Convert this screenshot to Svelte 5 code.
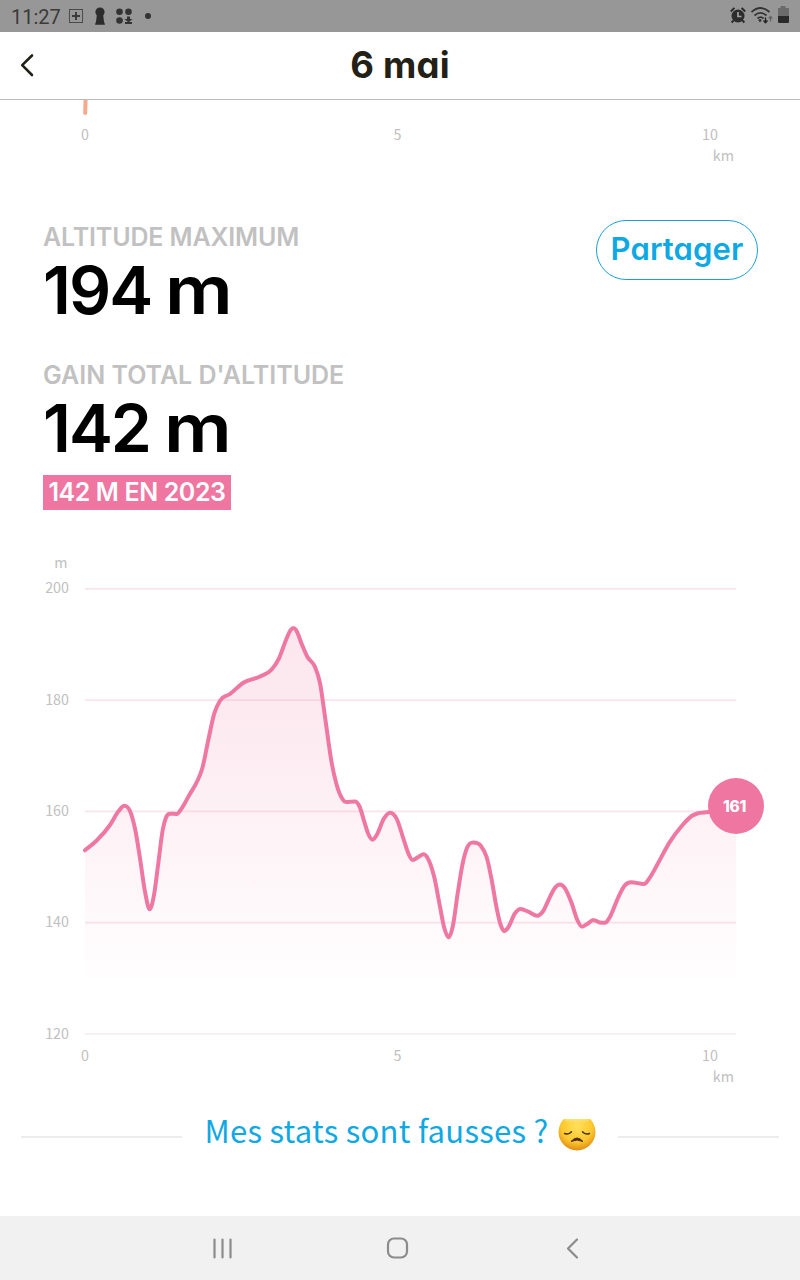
<script lang="ts">
  const left = 85;
  const right = 736;
  const ticks = [200, 180, 160, 140, 120];
  const kms = [0, 5, 10];

  const points = [
    [85, 310.3], [96.7, 300.5], [110, 285], [118.3, 271.5], [124.3, 265.7], [130, 271], [135.3, 290],
    [140, 318.3], [145, 351.7], [149.7, 369.3], [154, 355], [158.3, 323.3], [162.7, 290], [166, 277.5],
    [170, 273.7], [176.7, 274], [181.7, 268.3], [189.3, 255], [197.3, 241], [202.3, 228.3], [208.3, 200],
    [214.3, 173.3], [220, 160.7], [230, 154], [243.3, 142.7], [260, 136.5], [271.7, 129.5], [279, 118.3],
    [286, 100], [290.7, 90], [293.3, 88], [296, 90], [301.7, 104], [307.3, 116.7], [315, 127],
    [320, 143], [325, 176.7], [331.7, 223], [336.7, 245], [341.7, 257.8], [346, 262], [355, 261.5],
    [359.3, 266], [364.3, 281.7], [368.3, 294], [372.7, 299.7], [376.7, 295], [384, 278.3], [390, 272.7],
    [396.7, 278.8], [403.3, 298.3], [408.3, 313.3], [412.7, 320], [418.3, 317], [423.7, 314.3],
    [428.3, 319.3], [434.3, 337.3], [440, 366.7], [444.3, 388], [448.7, 397.3], [452.7, 386.7],
    [457.7, 353.3], [462.7, 323.3], [467.3, 307.3], [473.3, 302.5], [480.7, 305.6], [486.7, 317.3],
    [491.7, 340], [496.7, 368.3], [500.7, 385], [504.3, 391], [508.3, 387.3], [515, 373.3], [520.7, 369],
    [528.3, 371.7], [537.3, 375.7], [542.7, 371.7], [549.3, 358.3], [555, 347.7], [560, 344.5],
    [565, 348.3], [571.7, 363.3], [577.3, 380], [582, 386.7], [587.3, 384], [593.3, 380], [600, 382.5],
    [605, 382.8], [609.3, 378], [618.3, 357.3], [624.3, 346], [631.3, 342.3], [644, 344], [650, 337.3],
    [658.3, 322.7], [670, 301.7], [681.7, 286], [691.7, 276], [697.3, 273.5], [708.3, 272], [717, 270],
    [736, 266]
  ];

  function tickY(value: number) {
    return 48.8 + (200 - value) * 5.565;
  }

  function kmX(km: number) {
    return left + km * 62.5;
  }

  // cubic interpolation with flat tangents at the peaks, so they do not overshoot
  function smooth(pts: number[][]) {
    const gaps = pts.slice(1).map((p, i) => p[0] - pts[i][0]);
    const slopes = gaps.map((gap, i) => (pts[i + 1][1] - pts[i][1]) / gap);
    const tangents = pts.map((_, i) => {
      if (i === 0) return slopes[0];
      if (i === pts.length - 1) return slopes[i - 1];
      const a = slopes[i - 1];
      const b = slopes[i];
      if (a * b <= 0) return 0;
      const mean = (a * gaps[i] + b * gaps[i - 1]) / (gaps[i - 1] + gaps[i]);
      const limit = 3 * Math.min(Math.abs(a), Math.abs(b));
      return Math.sign(mean) * Math.min(Math.abs(mean), limit);
    });
    let d = `M${pts[0][0]} ${pts[0][1]}`;
    for (let i = 1; i < pts.length; i++) {
      const [x0, y0] = pts[i - 1];
      const [x1, y1] = pts[i];
      const dx = gaps[i - 1] / 3;
      d += `C${x0 + dx} ${y0 + dx * tangents[i - 1]} ${x1 - dx} ${y1 - dx * tangents[i]} ${x1} ${y1}`;
    }
    return d;
  }

  const line = smooth(points);
  const area = `${line}V440H${left}Z`;
</script>

<div class="screen">
  <div class="status">
    <span class="time">11:27</span>
    <svg width="88" height="32" viewBox="0 0 88 32">
      <rect x="1.5" y="9.5" width="13" height="13" fill="none" stroke="#4a4a4a" />
      <path d="M8 12v8M4 16h8" stroke="#3c3c3c" stroke-width="2" />
      <circle cx="32" cy="12" r="4.6" fill="#2c2c2c" />
      <path d="M29 14h6l1 7.5 1 3.3H27l1-3.3z" fill="#2c2c2c" />
      <g fill="#333">
        <circle cx="51.5" cy="11.7" r="3.3" />
        <circle cx="60.5" cy="11.7" r="3.3" />
        <circle cx="51.5" cy="20.5" r="3.3" />
        <path d="M59 16.5h3V19h2.500l-4 3.500-4-3.500H59zM57 22h7v2h-7z" />
        <circle cx="80" cy="16" r="3" />
      </g>
    </svg>
    <svg class="status-right" width="62" height="32" viewBox="0 0 62 32">
      <circle cx="10" cy="16" r="6.5" fill="#2c2c2c" />
      <path d="M10 12v4.5h3.500" fill="none" stroke="#a0a0a0" stroke-width="1.700" />
      <path d="M2.800 11.500l3.600-3.600M17.200 11.500l-3.600-3.600M5.600 20.500l-2 2M14.400 20.500l2 2" stroke="#2c2c2c" stroke-width="2" />
      <path d="M23.500 12Q32.500 4 41.500 12M26.500 15.500Q32.500 10.300 38.500 15.500M29.500 18.500Q32.500 15.800 35.500 18.500" fill="none" stroke="#333" stroke-width="1.700" />
      <circle cx="32" cy="20.500" r="1.400" fill="#333" />
      <path d="M37.500 17.500v5M35.500 20.500l2 2.200 2-2.200" fill="none" stroke="#222" stroke-width="1.400" />
      <path d="M42.500 21.500v-5M40.700 18.500l1.800-2 1.800 2" fill="none" stroke="#666" stroke-width="1.300" />
      <path d="M50 8h2.500V6h5v2H60a1 1 0 0 1 1 1v7H50z" fill="#6b6b6b" />
      <path d="M50 16h11v5.800a1.200 1.200 0 0 1-1.200 1.200h-8.600a1.200 1.200 0 0 1-1.200-1.200z" fill="#2a2a2a" />
    </svg>
  </div>

  <header class="header">
    <svg class="back" width="20" height="26" viewBox="0 0 20 26">
      <path d="M15 3.500L5.200 13.200 15 23" fill="none" stroke="#232116" stroke-width="2.600" stroke-linecap="round" stroke-linejoin="round" />
    </svg>
    <h1>6 mai</h1>
  </header>

  <svg width="800" height="80" viewBox="0 0 800 80">
    <path d="M85.700 -6L85.200 13" stroke="#f6a98b" stroke-width="4" stroke-linecap="round" />
    {#each kms as km}
      <text class="axis" x={kmX(km)} y="40" text-anchor="middle">{km}</text>
    {/each}
    <text class="axis" x="734" y="61" text-anchor="end">km</text>
  </svg>

  <section class="stats">
    <div>
      <div class="label max-label">ALTITUDE MAXIMUM</div>
      <div class="value">194 <span class="unit">m</span></div>
      <div class="label gain-label">GAIN TOTAL D'ALTITUDE</div>
      <div class="value">142 <span class="unit">m</span></div>
      <div class="badge">142 M EN 2023</div>
    </div>
    <button class="share">Partager</button>
  </section>

  <svg width="800" height="560" viewBox="0 0 800 560">
    <defs>
      <linearGradient id="fade" gradientUnits="userSpaceOnUse" x1="0" y1="88" x2="0" y2="440">
        <stop offset="0" stop-color="#ee76a0" stop-opacity="0.18" />
        <stop offset="0.25" stop-color="#ee76a0" stop-opacity="0.155" />
        <stop offset="1" stop-color="#ee76a0" stop-opacity="0.008" />
      </linearGradient>
    </defs>
    <text class="axis" x="67.500" y="27.500" text-anchor="end">m</text>
    {#each ticks as tick}
      <line x1={left} x2={right} y1={tickY(tick)} y2={tickY(tick)} stroke={tick === 120 ? '#f6eaee' : '#fae4ea'} stroke-width="1.700" />
      <text class="axis" x="69" y={tickY(tick) + 4.500} text-anchor="end">{tick}</text>
    {/each}
    <path d={area} fill="url(#fade)" />
    <path d={line} fill="none" stroke="#ee78a2" stroke-width="4" stroke-linecap="round" stroke-linejoin="round" />
    <circle cx="736" cy="266" r="28" fill="#ee76a0" />
    <text class="marker" x="734.500" y="272" text-anchor="middle">161</text>
    {#each kms as km}
      <text class="axis" x={kmX(km)} y="521" text-anchor="middle">{km}</text>
    {/each}
    <text class="axis" x="734" y="542" text-anchor="end">km</text>
  </svg>

  <div class="wrong">
    <span class="rule"></span>
    <div class="wrong-link">
      <span>Mes stats sont fausses ?</span>
      <svg width="38" height="34" viewBox="0 0 38 34">
        <defs>
          <radialGradient id="face" cx="0.500" cy="0.350" r="0.650">
            <stop offset="0" stop-color="#ffe05a" />
            <stop offset="0.650" stop-color="#fcc72e" />
            <stop offset="1" stop-color="#e28c14" />
          </radialGradient>
          <linearGradient id="shine" x1="0" y1="0" x2="0" y2="1">
            <stop offset="0.300" stop-color="#fff7d0" stop-opacity="0.900" />
            <stop offset="1" stop-color="#ffe05a" stop-opacity="0" />
          </linearGradient>
        </defs>
        <circle cx="19" cy="13" r="18.500" fill="url(#face)" />
        <ellipse cx="19" cy="-1" rx="13" ry="7" fill="url(#shine)" />
        <path d="M6.500 14.500Q11 16 13.500 12.800M31.500 14.500Q27 16 24.500 12.800" fill="none" stroke="#4b3413" stroke-width="1.500" stroke-linecap="round" />
        <path d="M13 22.500Q19 15.500 25 22.500Q19 19.500 13 22.500z" fill="#4b2a10" stroke="#4b2a10" stroke-linejoin="round" />
      </svg>
    </div>
    <span class="rule"></span>
  </div>

  <nav class="nav">
    <svg width="22" height="24" viewBox="0 0 22 24">
      <path d="M2.500 3.500v18M10.500 3.500v18M18.500 3.500v18" stroke="#8b8b8b" stroke-width="2.200" stroke-linecap="round" />
    </svg>
    <svg width="24" height="24" viewBox="0 0 24 24">
      <rect x="2" y="2.500" width="19" height="19" rx="6" fill="none" stroke="#8b8b8b" stroke-width="2.200" />
    </svg>
    <svg width="22" height="24" viewBox="0 0 22 24">
      <path d="M15 3.500L6 12.500l9 9" fill="none" stroke="#8b8b8b" stroke-width="2.200" stroke-linecap="round" stroke-linejoin="round" />
    </svg>
  </nav>
</div>

<style>
  :global(body) {
    margin: 0;
    background: #fff;
  }

  .screen {
    display: flex;
    flex-direction: column;
    width: 800px;
    height: 1280px;
    overflow: hidden;
    background: #fff;
    font-family: Inter, sans-serif;
    font-feature-settings: 'cv11';
  }

  svg {
    display: block;
    flex-shrink: 0;
  }

  .status {
    display: flex;
    align-items: center;
    height: 32px;
    box-sizing: border-box;
    padding: 0 10px 0 11px;
    background: #979797;
  }

  .time {
    width: 57px;
    padding-top: 2px;
    font-family: Roboto, sans-serif;
    font-size: 20px;
    line-height: 32px;
    color: #3a3a3a;
  }

  .status-right {
    margin-left: auto;
  }

  .header {
    display: grid;
    grid-template-columns: 60px 1fr 60px;
    align-items: center;
    height: 65px;
    padding-bottom: 2px;
    border-bottom: 1px solid #bdbdbd;
  }

  .back {
    margin-left: 17px;
  }

  h1 {
    margin: 0;
    text-align: center;
    font-size: 36.5px;
    line-height: 64px;
    font-weight: 700;
    letter-spacing: 0.2px;
    color: #232116;
  }

  .axis {
    font-family: 'Noto Sans CJK SC', sans-serif;
    font-size: 14.3px;
    font-weight: 400;
    fill: #c0c0c0;
  }

  .stats {
    display: flex;
    justify-content: space-between;
    align-items: flex-start;
    height: 360px;
    box-sizing: border-box;
    padding: 40px 42px 0 43px;
    white-space: nowrap;
  }

  .label {
    padding: 2px 0;
    font-size: 25px;
    line-height: 30px;
    font-weight: 600;
    color: #c1c1c1;
  }

  .max-label {
    letter-spacing: -0.15px;
  }

  .gain-label {
    padding-top: 34px;
  }

  .value {
    font-size: 66px;
    line-height: 72px;
    font-weight: 600;
    letter-spacing: -2px;
    word-spacing: -1px;
    color: #000;
  }

  .unit {
    display: inline-block;
    transform: scaleX(1.14);
    transform-origin: left;
  }

  .badge {
    width: 188px;
    height: 35px;
    margin-top: 11px;
    background: #ee76a0;
    color: #fff;
    text-align: center;
    font-size: 25px;
    line-height: 35px;
    font-weight: 600;
    letter-spacing: -0.4px;
  }

  .share {
    width: 162px;
    height: 60px;
    padding: 0 0 4px;
    border: 1.5px solid #1b9fd8;
    border-radius: 30px;
    background: #fff;
    color: #0ea8e3;
    font-family: inherit;
    font-feature-settings: inherit;
    font-size: 31px;
    font-weight: 600;
    letter-spacing: 0.1px;
  }

  .marker {
    font-size: 15.5px;
    font-weight: 800;
    letter-spacing: -0.3px;
    fill: #fff;
  }

  .wrong {
    display: flex;
    justify-content: space-between;
    align-items: flex-start;
    height: 116px;
    box-sizing: border-box;
    padding: 19px 21px 0;
  }

  .rule {
    width: 161px;
    height: 2px;
    margin-top: 17px;
    background: #ececec;
  }

  .wrong-link {
    display: flex;
    justify-content: space-between;
    width: 391px;
    height: 34px;
    white-space: nowrap;
    font-family: 'Noto Sans CJK SC', sans-serif;
    font-size: 31px;
    line-height: 22px;
    letter-spacing: 0.28px;
    color: #0ea8e3;
  }

  .nav {
    display: flex;
    justify-content: space-between;
    align-items: center;
    height: 64px;
    box-sizing: border-box;
    padding: 0 216px 0 212px;
    background: #f1f1f1;
  }
</style>
